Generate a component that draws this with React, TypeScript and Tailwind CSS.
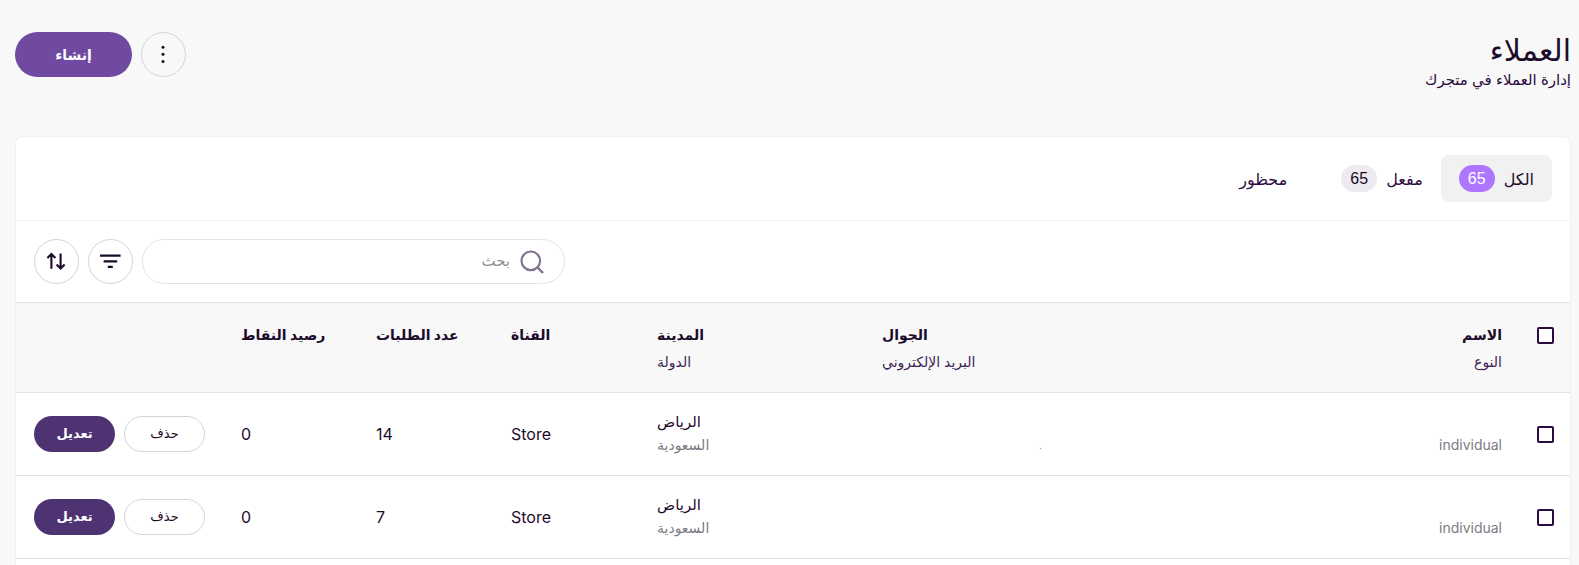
import { useState } from 'react'
import clsx from 'clsx'

interface Customer {
  id: number
  name: string
  type: string
  phone: string
  email: string
  city: string
  country: string
  channel: string
  orders: number
  points: number
}

const customers: Customer[] = [
  { id: 1, name: '', type: 'individual', phone: '', email: '.', city: 'الرياض', country: 'السعودية', channel: 'Store', orders: 14, points: 0 },
  { id: 2, name: '', type: 'individual', phone: '', email: '', city: 'الرياض', country: 'السعودية', channel: 'Store', orders: 7, points: 0 },
]

const tabs: { key: string; label: string; count?: number }[] = [
  { key: 'all', label: 'الكل', count: 65 },
  { key: 'active', label: 'مفعل', count: 65 },
  { key: 'blocked', label: 'محظور' },
]

const columns: { title: string; sub?: string; cls: string }[] = [
  { title: 'الاسم', sub: 'النوع', cls: 'text-right' },
  { title: 'الجوال', sub: 'البريد الإلكتروني', cls: 'text-left' },
  { title: 'المدينة', sub: 'الدولة', cls: 'text-left w-[225px]' },
  { title: 'القناة', cls: 'text-left w-[146px]' },
  { title: 'عدد الطلبات', cls: 'text-left w-[135px]' },
  { title: 'رصيد النقاط', cls: 'text-left w-[135px]' },
]

const roundBtn =
  'flex size-[45px] shrink-0 items-center justify-center rounded-full border border-[#d5d1dd] text-[#1d0b2b] hover:bg-black/5'

function Checkbox({ label }: { label: string }) {
  return (
    <input
      type="checkbox"
      aria-label={label}
      className="block size-[17px] appearance-none rounded-xs border-2 border-[#2b0b42] bg-white checked:bg-[#2b0b42]"
    />
  )
}

function DotsIcon() {
  return (
    <svg width="23" height="23" viewBox="0 0 23 23" fill="currentColor">
      <circle cx="11" cy="4.2" r="1.5" />
      <circle cx="11" cy="11.2" r="1.5" />
      <circle cx="11" cy="18.4" r="1.5" />
    </svg>
  )
}

function FilterIcon() {
  return (
    <svg width="23" height="23" viewBox="0 0 23 23" fill="currentColor">
      <rect x="1" y="4.4" width="20.6" height="2.3" rx="0.3" />
      <rect x="4.6" y="10.3" width="13.6" height="2.3" rx="0.3" />
      <rect x="8.8" y="15.8" width="5" height="2.3" rx="0.3" />
    </svg>
  )
}

function SortIcon() {
  return (
    <svg width="23" height="23" viewBox="0 0 23 23" fill="none" stroke="currentColor" strokeWidth="2.1">
      <path d="M6.4 18.8V4M2.4 8L6.4 4l4 4" />
      <path d="M15.6 3.6v14.8M11.6 14.6l4 4 4-4" />
    </svg>
  )
}

function SearchIcon() {
  return (
    <svg className="shrink-0" width="24" height="24" viewBox="0 0 24 24" fill="none" stroke="currentColor" strokeWidth="2.2">
      <circle cx="10.8" cy="10.8" r="9.3" />
      <path d="M17.2 17.2l5.8 5.8" strokeWidth="2.4" />
    </svg>
  )
}

export default function App() {
  const [tab, setTab] = useState('all')
  const [query, setQuery] = useState('')

  return (
    <div
      dir="rtl"
      className="flex min-h-screen flex-col bg-[#f8f8f8] pt-8 pr-2 pl-[15px] font-['Inter','DejaVu_Sans',sans-serif] text-[16px] text-[#1d0b2b]"
    >
      {/* Page header */}
      <header className="mb-[44px] flex items-start justify-between">
        <div>
          <h1 className="text-[30px] leading-9">العملاء</h1>
          <p className="text-[15px] leading-6 text-[#2b0b42]">إدارة العملاء في متجرك</p>
        </div>
        <div className="flex gap-[9px]">
          <button aria-label="المزيد" className={roundBtn}>
            <DotsIcon />
          </button>
          <button className="h-[45px] w-[117px] rounded-full bg-[#7049a0] text-[14px] font-semibold text-white hover:bg-[#62408d]">
            إنشاء
          </button>
        </div>
      </header>

      <main className="flex-1 rounded-t-lg border border-b-0 border-[#f0f0f0] bg-white">
        {/* Tabs */}
        <div className="flex border-b border-[#f0f0f0] p-[18px]">
          {tabs.map(t => (
            <button
              key={t.key}
              onClick={() => setTab(t.key)}
              className={clsx(
                'flex h-[47px] items-center gap-[9px] rounded-lg text-[16px]',
                t.count === undefined ? 'px-9' : 'px-[18px]',
                tab === t.key ? 'bg-[#f1f1f1]' : 'text-[#2b0b42]',
              )}
            >
              {t.label}
              {t.count !== undefined && (
                <span
                  className={clsx(
                    'flex h-[27px] w-9 items-center justify-center rounded-full font-["Liberation_Sans"]',
                    tab === t.key ? 'bg-[#ae75ff] text-white' : 'bg-[#edebf0] text-[#1d0b2b]',
                  )}
                >
                  {t.count}
                </span>
              )}
            </button>
          ))}
        </div>

        {/* Search and tools */}
        <div className="flex justify-end gap-[9px] p-[18px]">
          <label className="flex h-[45px] w-[423px] items-center gap-[10px] rounded-full border border-[#e4e3e8] px-5 text-[#83718f]">
            <SearchIcon />
            <input
              value={query}
              onChange={e => setQuery(e.target.value)}
              placeholder="بحث"
              aria-label="بحث"
              className="min-w-0 flex-1 bg-transparent text-[15px] text-[#1d0b2b] outline-none placeholder:text-[#8f8f96]"
            />
          </label>
          <button aria-label="تصفية" className={roundBtn}>
            <FilterIcon />
          </button>
          <button aria-label="ترتيب" className={roundBtn}>
            <SortIcon />
          </button>
        </div>

        <table className="w-full table-fixed border-collapse">
          <thead>
            <tr className="border-y border-[#e2e2e4] bg-[#f8f8f8] align-top">
              <th className="w-[50px] pt-6 pr-4">
                <Checkbox label="تحديد الكل" />
              </th>
              {columns.map(c => (
                <th key={c.title} className={clsx('px-[18px] pt-[18px] pb-[17px] leading-[27px]', c.cls)}>
                  <div className="text-[14px] font-bold">{c.title}</div>
                  {c.sub && <div className="text-[14px] font-normal text-[#3f1f58]">{c.sub}</div>}
                </th>
              ))}
              <td className="w-[207px]" />
            </tr>
          </thead>
          <tbody>
            {customers.map(c => (
              <tr key={c.id} className="border-b border-[#e2e2e4]">
                <td className="pr-4">
                  <Checkbox label={`تحديد ${c.id}`} />
                </td>
                <td className="px-[18px] pt-[17px] pb-[19px] text-right">
                  <div className="h-6">{c.name}</div>
                  <div className="h-[22px] text-[14px] leading-[22px] text-[#7b7b83]">{c.type}</div>
                </td>
                <td className="px-[18px] pt-[17px] pb-[19px] text-left">
                  <div className="h-6">{c.phone}</div>
                  <div className="h-[22px] pl-[157px] text-[10px] leading-[22px] text-[#7b7b83]">{c.email}</div>
                </td>
                <td className="px-[18px] pt-[17px] pb-[19px] text-left">
                  <div className="h-6 text-[15px] leading-6">{c.city}</div>
                  <div className="h-[22px] text-[14px] leading-[22px] text-[#7b7b83]">{c.country}</div>
                </td>
                <td className="px-[18px] text-left">{c.channel}</td>
                <td className="px-[18px] text-left">{c.orders}</td>
                <td className="px-[18px] text-left">{c.points}</td>
                <td className="px-[18px]">
                  <div className="flex justify-end gap-[9px]">
                    <button className="h-9 w-[81px] rounded-full border border-[#d5d1dd] text-[13px] hover:bg-black/5">
                      حذف
                    </button>
                    <button className="h-9 w-[81px] rounded-full bg-[#4e3372] text-[13px] font-semibold text-white hover:bg-[#422b61]">
                      تعديل
                    </button>
                  </div>
                </td>
              </tr>
            ))}
          </tbody>
        </table>
      </main>
    </div>
  )
}
